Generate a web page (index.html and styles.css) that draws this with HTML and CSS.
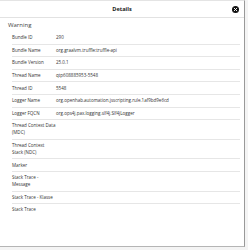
FILE: index.html
```html
<!DOCTYPE html>
<html lang="en">
<head>
    <meta charset="UTF-8">
    <meta name="viewport" content="width=device-width, initial-scale=1.0">
    <title>Details</title>
    <link rel="stylesheet" href="styles.css">
</head>
<body>
    <div class="dialog">
        <div class="dialog-header">
            <span class="dialog-title">Details</span>
            <span class="close-btn">
                <svg width="7" height="7" viewBox="0 0 16 16">
                    <circle cx="8" cy="8" r="8" fill="#111"/>
                    <path d="M5 5 L11 11 M11 5 L5 11" stroke="#fff" stroke-width="2.2" stroke-linecap="round"/>
                </svg>
            </span>
        </div>

        <div class="dialog-body">
            <div class="level">Warning</div>
            <table class="details">
                <tr><td class="label">Bundle ID</td><td>290</td></tr>
                <tr><td class="label">Bundle Name</td><td>org.graalvm.truffle:truffle-api</td></tr>
                <tr><td class="label">Bundle Version</td><td>25.0.1</td></tr>
                <tr><td class="label">Thread Name</td><td>qtp608885953-5548</td></tr>
                <tr><td class="label">Thread ID</td><td>5548</td></tr>
                <tr><td class="label">Logger Name</td><td>org.openhab.automation.jsscripting.rule.1af9bd9e6cd</td></tr>
                <tr><td class="label">Logger FQCN</td><td>org.ops4j.pax.logging.slf4j.Slf4jLogger</td></tr>
                <tr><td class="label">Thread Context Data (MDC)</td><td></td></tr>
                <tr><td class="label">Thread Context Stack (NDC)</td><td></td></tr>
                <tr><td class="label">Marker</td><td></td></tr>
                <tr><td class="label">Stack Trace - Message</td><td></td></tr>
                <tr><td class="label">Stack Trace - Klasse</td><td></td></tr>
                <tr class="last"><td class="label">Stack Trace</td><td></td></tr>
            </table>
        </div>
    </div>
</body>
</html>
```

FILE: styles.css
```css
body {
    margin: 0;
    background-color: #f4f4f4;
    font-family: 'Open Sans', 'Liberation Sans', sans-serif;
    color: #333;
}
.dialog {
    width: 245px;
    height: 247px;
    box-sizing: border-box;
    background-color: #fff;
    border-top: 1px solid #e4e4e4;
    border-right: 1px solid #999;
    border-bottom: 1px solid #b5b5b5;
    overflow: hidden;
}
.dialog-header {
    position: relative;
    height: 16px;
    border-bottom: 1px solid #e2e2e2;
    display: flex;
    align-items: center;
    justify-content: center;
}
.dialog-title {
    font-size: 5.6px;
    font-weight: bold;
    color: #222;
}
.close-btn {
    position: absolute;
    top: 4.5px;
    right: 5px;
    display: flex;
}
.dialog-body {
    padding: 0 4px 0 7px;
}
.level {
    font-size: 6px;
    line-height: 9px;
    padding: 2.5px 0 2.5px 1px;
    color: #444;
}
.details {
    width: calc(100% - 5px);
    margin-left: 5px;
    border-collapse: collapse;
    font-size: 4.5px;
    line-height: 7px;
}
.details td {
    padding: 2.3px 0;
    border-bottom: 1px solid #e6e6e6;
    vertical-align: middle;
}
.details .last td {
    border-bottom: none;
}
.details .label {
    width: 44px;
    padding-right: 0;
}
```
